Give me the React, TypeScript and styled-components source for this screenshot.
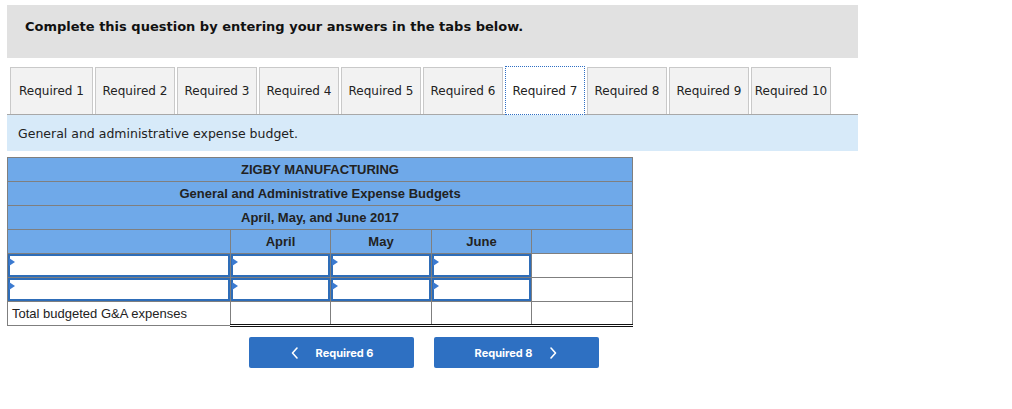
import styled, { createGlobalStyle } from 'styled-components';

const GlobalStyle = createGlobalStyle`
  html, body {
    margin: 0;
    padding: 0;
    background: #ffffff;
  }
  * {
    box-sizing: border-box;
  }
`;

const tabs = Array.from({ length: 10 }, (_, i) => `Required ${i + 1}`);
const ACTIVE = 6;
const colWidths = [223, 100, 101, 100, 101];

const App = () => {
  return (
    <Page>
      <GlobalStyle />
      <Header>Complete this question by entering your answers in the tabs below.</Header>
      <TabBar>
        {tabs.map((label, i) => (
          <Tab key={label} $active={i === ACTIVE}>
            {label}
          </Tab>
        ))}
      </TabBar>
      <Prompt>General and administrative expense budget.</Prompt>
      <Sheet>
        <colgroup>
          {colWidths.map((w, i) => (
            <col key={i} style={{ width: w }} />
          ))}
        </colgroup>
        <tbody>
          <TitleRow>
            <th colSpan={5}>ZIGBY MANUFACTURING</th>
          </TitleRow>
          <TitleRow>
            <th colSpan={5}>General and Administrative Expense Budgets</th>
          </TitleRow>
          <TitleRow>
            <th colSpan={5}>April, May, and June 2017</th>
          </TitleRow>
          <TitleRow>
            <th />
            <th>April</th>
            <th>May</th>
            <th>June</th>
            <th />
          </TitleRow>
          {[0, 1].map((row) => (
            <tr key={row}>
              <InputCell>
                <Entry />
              </InputCell>
              <InputCell>
                <Entry />
              </InputCell>
              <InputCell>
                <Entry />
              </InputCell>
              <InputCell>
                <Entry />
              </InputCell>
              <PlainCell />
            </tr>
          ))}
          <tr>
            <LabelCell>Total budgeted G&amp;A expenses</LabelCell>
            <TotalCell />
            <TotalCell />
            <TotalCell />
            <TotalCell />
          </tr>
        </tbody>
      </Sheet>
      <Nav>
        <NavButton>
          <Chevron viewBox="0 0 10 14">
            <path d="M7 2 L2.5 7 L7 12" />
          </Chevron>
          Required 6
        </NavButton>
        <NavButton>
          Required 8
          <Chevron viewBox="0 0 10 14">
            <path d="M3 2 L7.5 7 L3 12" />
          </Chevron>
        </NavButton>
      </Nav>
    </Page>
  );
};

const Page = styled.div`
  padding: 5px 0 0 7px;
  width: 858px;
  font-family: 'DejaVu Sans', Verdana, sans-serif;
`;

const Header = styled.div`
  width: 851px;
  height: 53px;
  background: #e1e1e1;
  padding: 0 18px;
  display: flex;
  align-items: center;
  padding-bottom: 10px;
  font-size: 13px;
  font-weight: 700;
  color: #111;
`;

const TabBar = styled.div`
  margin-top: 8px;
  width: 851px;
  display: flex;
  align-items: flex-end;
  gap: 2px;
  padding-left: 3px;
  border-bottom: 1px solid #a8a8a8;
`;

const Tab = styled.div<{ $active?: boolean }>`
  min-width: 80px;
  height: ${(p) => (p.$active ? '49px' : '47px')};
  margin-bottom: ${(p) => (p.$active ? '-1px' : '0')};
  padding: 0 2px;
  display: flex;
  align-items: center;
  justify-content: center;
  font-size: 12px;
  color: #222;
  background: ${(p) => (p.$active ? '#ffffff' : '#f2f2f2')};
  border: ${(p) => (p.$active ? '1px dotted #2f6fc4' : '1px solid #c9c9c9')};
  border-bottom: ${(p) => (p.$active ? '1px dotted #2f6fc4' : 'none')};
  position: relative;
  z-index: ${(p) => (p.$active ? 1 : 0)};
  &:first-child {
    min-width: 83px;
  }
`;

const Prompt = styled.div`
  width: 851px;
  height: 36px;
  background: #d7eaf9;
  padding: 0 11px;
  display: flex;
  align-items: center;
  font-size: 12.5px;
  color: #222;
`;

const Sheet = styled.table`
  margin-top: 6px;
  border-collapse: collapse;
  table-layout: fixed;
  width: 626px;
  font-family: 'Liberation Sans', Arial, sans-serif;
  font-size: 13px;
  color: #222;
  border: 1px solid #808080;
  td,
  th {
    padding: 0;
  }
`;

const TitleRow = styled.tr`
  height: 24px;
  th {
    background: #6fa9e9;
    border: 1px solid #7f7f7f;
    font-weight: 700;
    text-align: center;
    color: #222;
  }
`;

const InputCell = styled.td`
  height: 24px;
  border: 1px solid #7f7f7f;
  background: #ffffff;
`;

const Entry = styled.div`
  position: relative;
  height: 23px;
  border: 2px solid #2e6db8;
  background: #fff;
  &::before {
    content: '';
    position: absolute;
    left: -1px;
    top: 2px;
    border-top: 4px solid transparent;
    border-bottom: 4px solid transparent;
    border-left: 6px solid #3b7ad0;
  }
`;

const PlainCell = styled.td`
  height: 24px;
  border: 1px solid #7f7f7f;
  background: #ffffff;
`;

const LabelCell = styled.td`
  height: 24px;
  border: 1px solid #7f7f7f;
  padding-left: 4px !important;
  white-space: nowrap;
  color: #222;
`;

const TotalCell = styled.td`
  height: 24px;
  border-left: 1px solid #7f7f7f;
  border-right: 1px solid #7f7f7f;
  border-top: 1px solid #111;
  border-bottom: 3px double #111;
`;

const Nav = styled.div`
  margin-top: 10px;
  margin-left: 242px;
  display: flex;
  gap: 20px;
`;

const NavButton = styled.button`
  width: 165px;
  height: 31px;
  border: none;
  border-radius: 2px;
  background: #2e70c2;
  color: #ffffff;
  font-family: Inter, 'Open Sans', sans-serif;
  font-size: 11px;
  font-weight: 700;
  display: flex;
  align-items: center;
  justify-content: center;
  gap: 16px;
  padding: 0;
`;

const Chevron = styled.svg`
  width: 10px;
  height: 14px;
  fill: none;
  stroke: #ffffff;
  stroke-width: 1.6;
  stroke-linecap: round;
  stroke-linejoin: round;
`;

export default App;
